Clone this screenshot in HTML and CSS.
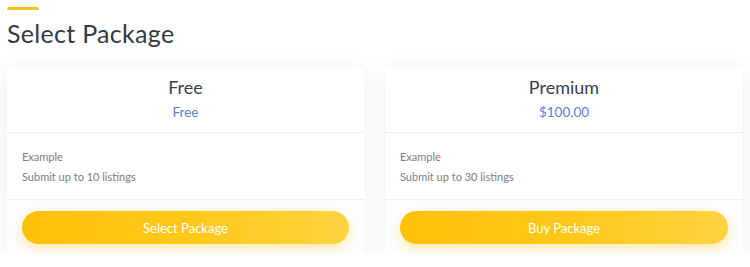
FILE: index.html
```html
<!DOCTYPE html>
<html lang="en">
<head>
<meta charset="utf-8">
<title>Select Package</title>
<link rel="stylesheet" href="styles.css">
</head>
<body>
<main class="page">
  <div class="accent"></div>
  <h1 class="title">Select Package</h1>
  <div class="packages">
    <section class="card">
      <header class="card-head">
        <h2 class="pkg-name">Free</h2>
        <div class="pkg-price">Free</div>
      </header>
      <div class="card-body">
        <p class="feature">Example</p>
        <p class="feature">Submit up to 10 listings</p>
      </div>
      <footer class="card-foot">
        <button class="btn">Select Package</button>
      </footer>
    </section>
    <section class="card">
      <header class="card-head">
        <h2 class="pkg-name">Premium</h2>
        <div class="pkg-price">$100.00</div>
      </header>
      <div class="card-body">
        <p class="feature">Example</p>
        <p class="feature">Submit up to 30 listings</p>
      </div>
      <footer class="card-foot">
        <button class="btn">Buy Package</button>
      </footer>
    </section>
  </div>
</main>
</body>
</html>
```

FILE: styles.css
```css
* { box-sizing: border-box; }
html, body { margin: 0; padding: 0; background: #ffffff; }
body { font-family: "Lato", "Noto Sans", sans-serif; color: #333a45; }

.page { padding: 7px 7px 0 7px; }

.accent { width: 32px; height: 3px; background: #f7c31a; border-radius: 2px; }

.title {
  margin: 8px 0 0 0;
  font-weight: 400;
  font-size: 25px;
  line-height: 30px;
  letter-spacing: 0.3px;
  color: #343a45;
}

.packages {
  display: grid;
  grid-template-columns: 357px 358px;
  gap: 21px;
  margin-top: 20px;
}

.card {
  background: #fff;
  border-radius: 4px;
  box-shadow: 0 2px 22px rgba(30, 40, 60, 0.08);
  display: flex;
  flex-direction: column;
}

.card-head {
  text-align: center;
  padding: 8px 15px 11px;
  border-bottom: 1px solid #eef0f2;
}
.pkg-name {
  margin: 0;
  font-weight: 400;
  font-size: 18px;
  line-height: 22px;
  color: #3a4048;
}
.pkg-price {
  margin-top: 5px;
  font-size: 13.5px;
  line-height: 18px;
  color: #5b80d8;
}

.card-body {
  padding: 17px 15px 15px;
  border-bottom: 1px solid #eef0f2;
}
.feature {
  margin: 0;
  font-size: 11px;
  line-height: 14px;
  color: #7a7d82;
}
.feature + .feature { margin-top: 6px; }

.card-foot {
  padding: 11px 15px 10px;
  background: #fdfdfd;
  border-radius: 0 0 4px 4px;
}
.btn {
  display: block;
  width: 100%;
  height: 33px;
  border: 0;
  border-radius: 17px;
  background: linear-gradient(90deg, #ffc107 0%, #ffc818 50%, #ffd341 100%);
  box-shadow: 0 4px 12px rgba(255, 193, 7, 0.35);
  color: #fff;
  font-family: "Lato", "Noto Sans", sans-serif;
  font-size: 13px;
  cursor: pointer;
}
```
